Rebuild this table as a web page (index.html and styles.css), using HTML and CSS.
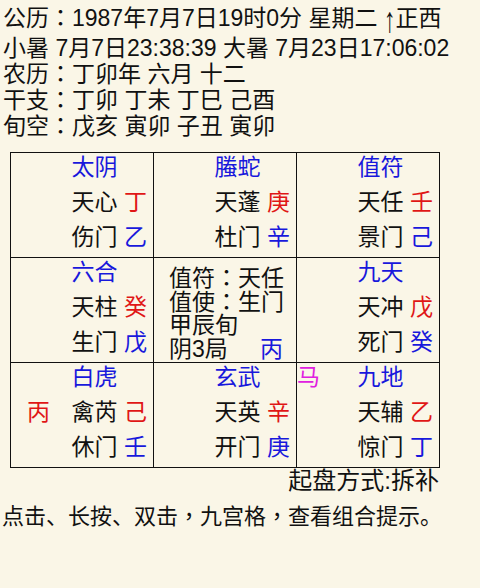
FILE: index.html
```html
<!DOCTYPE html>
<html lang="zh-CN">
<head>
<meta charset="utf-8">
<link rel="stylesheet" href="styles.css">
</head>
<body>
<div class="info">
  <div class="line first">公历<span class="tc" lang="zh-TW">：</span>1987年7月7日19时0分 星期二 <span class="arrow">↑</span>正西</div>
  <div class="line">小暑 7月7日23:38:39 大暑 7月23日17:06:02</div>
  <div class="line">农历<span class="tc" lang="zh-TW">：</span>丁卯年 六月 十二</div>
  <div class="line">干支<span class="tc" lang="zh-TW">：</span>丁卯 丁未 丁巳 己酉</div>
  <div class="line">旬空<span class="tc" lang="zh-TW">：</span>戊亥 寅卯 子丑 寅卯</div>
</div>
<div class="board">
  <div class="cell">
    <div class="main">
      <div class="god">太阴</div>
      <div>天心 <span class="red">丁</span></div>
      <div>伤门 <span class="blue">乙</span></div>
    </div>
  </div>
  <div class="cell">
    <div class="main">
      <div class="god">螣蛇</div>
      <div>天蓬 <span class="red">庚</span></div>
      <div>杜门 <span class="blue">辛</span></div>
    </div>
  </div>
  <div class="cell">
    <div class="main">
      <div class="god">值符</div>
      <div>天任 <span class="red">壬</span></div>
      <div>景门 <span class="blue">己</span></div>
    </div>
  </div>
  <div class="cell">
    <div class="main">
      <div class="god">六合</div>
      <div>天柱 <span class="red">癸</span></div>
      <div>生门 <span class="blue">戊</span></div>
    </div>
  </div>
  <div class="center">
    <div>值符<span class="tc" lang="zh-TW">：</span>天任</div>
    <div>值使<span class="tc" lang="zh-TW">：</span>生门</div>
    <div>甲辰旬</div>
    <div class="split"><span>阴3局</span><span class="blue">丙</span></div>
  </div>
  <div class="cell">
    <div class="main">
      <div class="god">九天</div>
      <div>天冲 <span class="red">戊</span></div>
      <div>死门 <span class="blue">癸</span></div>
    </div>
  </div>
  <div class="cell">
    <div class="side side-row2 red">丙</div>
    <div class="main">
      <div class="god">白虎</div>
      <div>禽芮 <span class="red">己</span></div>
      <div>休门 <span class="blue">壬</span></div>
    </div>
  </div>
  <div class="cell">
    <div class="main">
      <div class="god">玄武</div>
      <div>天英 <span class="red">辛</span></div>
      <div>开门 <span class="blue">庚</span></div>
    </div>
  </div>
  <div class="cell">
    <div class="side side-row1 magenta">马</div>
    <div class="main">
      <div class="god">九地</div>
      <div>天辅 <span class="red">乙</span></div>
      <div>惊门 <span class="blue">丁</span></div>
    </div>
  </div>
</div>
<div class="method">起盘方式:拆补</div>
<div class="hint">点击、长按、双击<span class="tc" lang="zh-TW">，</span>九宫格<span class="tc" lang="zh-TW">，</span>查看组合提示。</div>
</body>
</html>
```

FILE: styles.css
```css
html, body {
  margin: 0;
  padding: 0;
}
body {
  width: 480px;
  height: 588px;
  background: #faf6e7;
  color: #111;
  font-family: "Liberation Sans", "Noto Sans CJK SC", sans-serif;
  font-size: 23px;
  overflow: hidden;
}
.tc {
  font-family: "Noto Sans CJK TC", sans-serif;
  line-height: 0;
}
.arrow {
  display: inline-block;
  line-height: 0;
  transform: translateY(2px) scaleY(1.55);
}
.info {
  padding: 4px 0 0 3px;
}
.line {
  line-height: 26px;
  white-space: nowrap;
}
.line.first {
  line-height: 29px;
  margin-bottom: 2px;
}
.board {
  margin: 13px 0 0 10px;
  display: grid;
  grid-template-columns: repeat(3, 143px);
  grid-template-rows: repeat(3, 105px);
  width: max-content;
  border-left: 1px solid #111;
  border-top: 1px solid #111;
}
.cell, .center {
  border-right: 1px solid #111;
  border-bottom: 1px solid #111;
}
.cell {
  display: flex;
  justify-content: flex-end;
  padding-right: 6px;
}
.main {
  margin-top: -3px;
  line-height: 35px;
  white-space: nowrap;
}
.side {
  margin-top: -3px;
  line-height: 35px;
  margin-right: auto;
}
.side-row1 {
  margin-left: 0;
}
.side-row2 {
  padding-top: 35px;
  margin-left: 16px;
}
.god {
  color: #1818dc;
}
.red {
  color: #e01616;
}
.blue {
  color: #1818dc;
}
.magenta {
  color: #e020e0;
}
.center {
  padding: 9px 13px 0 15px;
  line-height: 23.5px;
  white-space: nowrap;
}
.split {
  display: flex;
  justify-content: space-between;
}
.method {
  font-size: 24px;
  line-height: 26px;
  text-align: right;
  padding-right: 41px;
}
.hint {
  font-size: 22px;
  line-height: 26px;
  margin-top: 10px;
  padding-left: 2px;
  white-space: nowrap;
}
```
